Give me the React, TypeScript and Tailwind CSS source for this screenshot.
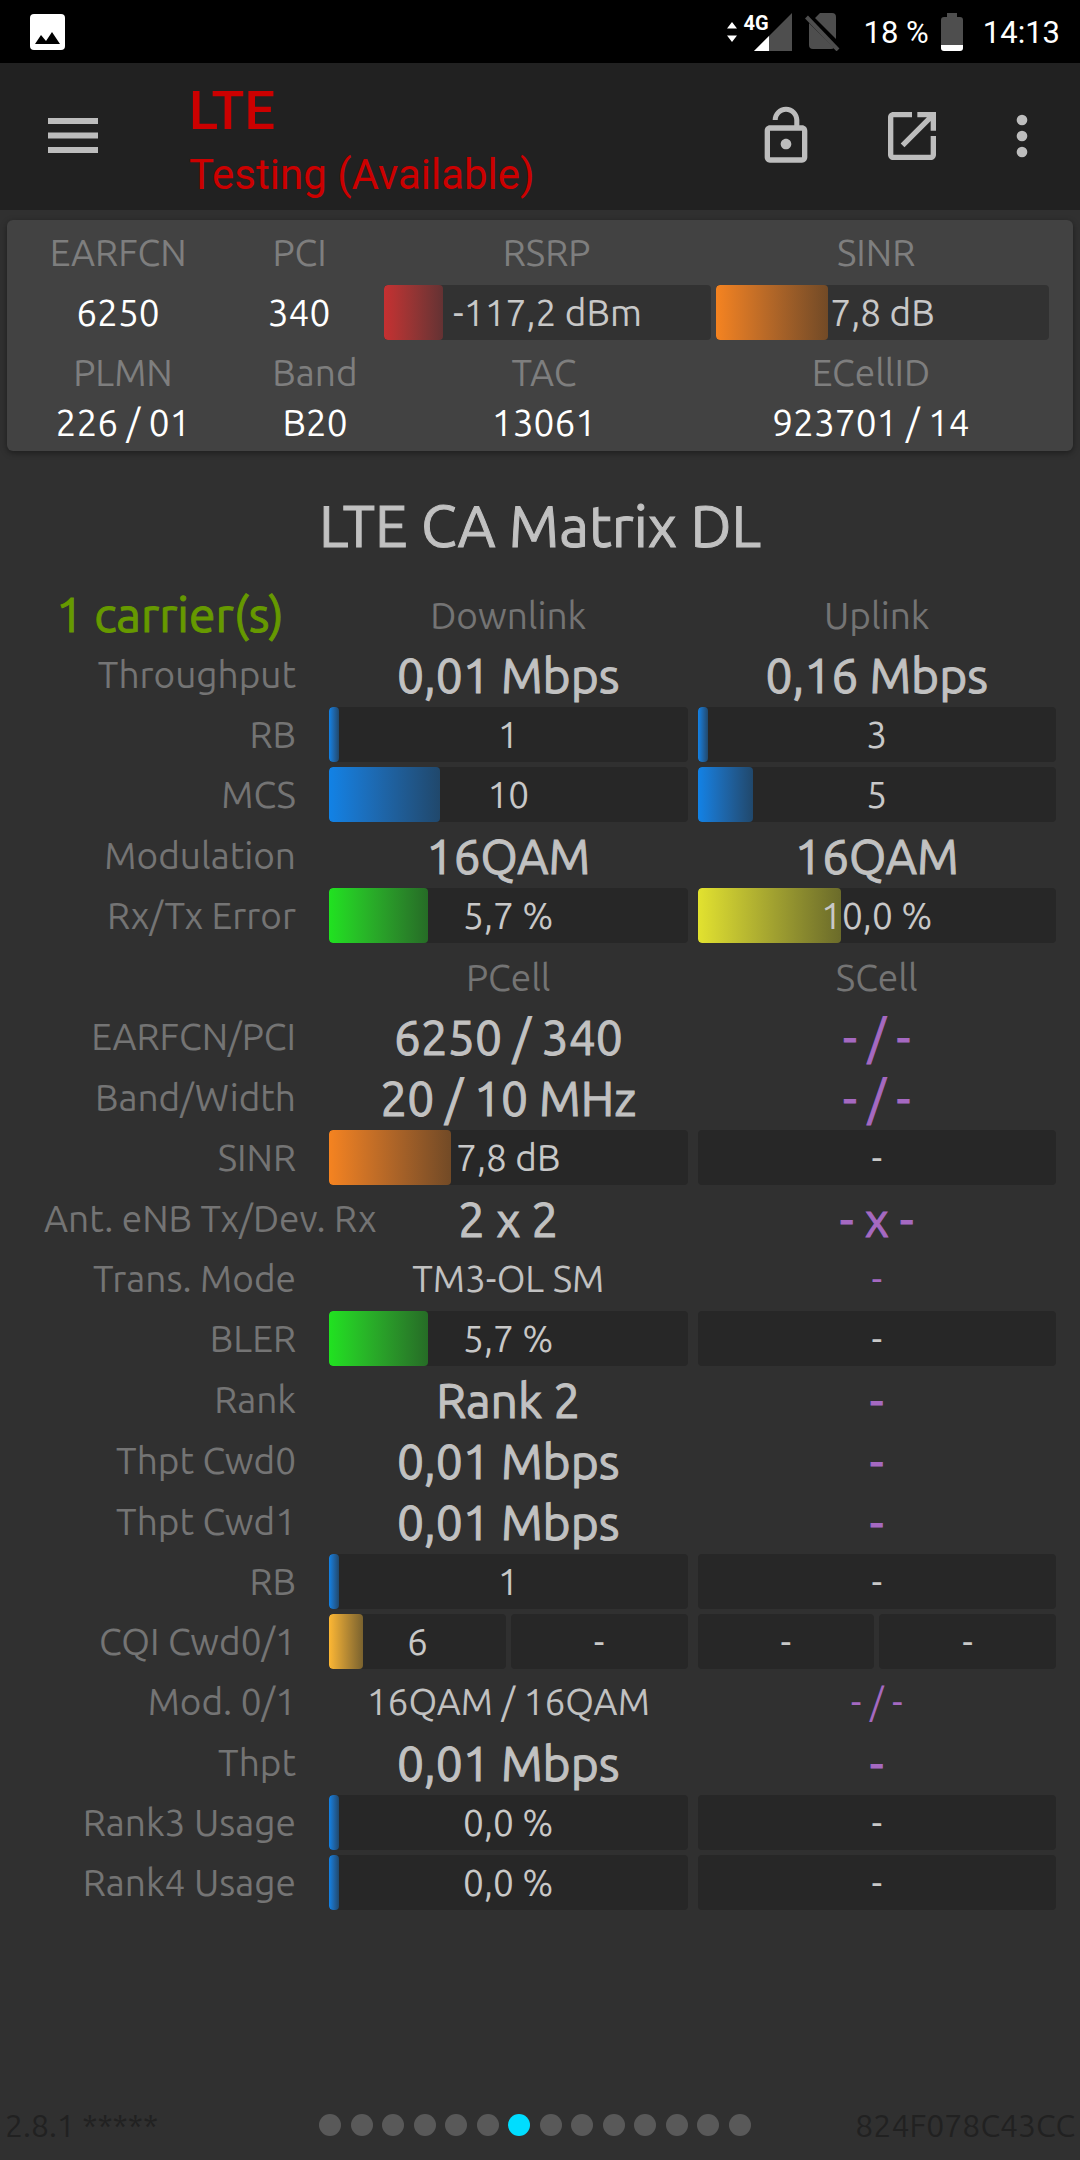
import type { ReactNode } from 'react';

type Tone = 'blue' | 'green' | 'yellow' | 'orange' | 'amber' | 'red';

interface Gauge {
  text: string;
  percent?: number;
  tone?: Tone;
}

interface MatrixRow {
  label: string;
  kind: 'head' | 'large' | 'small' | 'gauge';
  first: string | Gauge[];
  second: string | Gauge[];
}

const TONES: Record<Tone, string> = {
  blue: 'from-[#1182e6] to-[#20486c]',
  green: 'from-[#20e220] to-[#266c26]',
  yellow: 'from-[#e2e22f] to-[#6b6b2a]',
  orange: 'from-[#f58320] to-[#724a26]',
  amber: 'from-[#fdb733] to-[#7a622e]',
  red: 'from-[#c63031] to-[#643233]'
};

const NONE: Gauge[] = [{ text: '-' }];

const ROWS: MatrixRow[] = [
  { label: 'Throughput', kind: 'large', first: '0,01 Mbps', second: '0,16 Mbps' },
  {
    label: 'RB',
    kind: 'gauge',
    first: [{ text: '1', percent: 1, tone: 'blue' }],
    second: [{ text: '3', percent: 2, tone: 'blue' }]
  },
  {
    label: 'MCS',
    kind: 'gauge',
    first: [{ text: '10', percent: 31, tone: 'blue' }],
    second: [{ text: '5', percent: 15.5, tone: 'blue' }]
  },
  { label: 'Modulation', kind: 'large', first: '16QAM', second: '16QAM' },
  {
    label: 'Rx/Tx Error',
    kind: 'gauge',
    first: [{ text: '5,7 %', percent: 27.5, tone: 'green' }],
    second: [{ text: '10,0 %', percent: 40, tone: 'yellow' }]
  },
  { label: '', kind: 'head', first: 'PCell', second: 'SCell' },
  { label: 'EARFCN/PCI', kind: 'large', first: '6250 / 340', second: '- / -' },
  { label: 'Band/Width', kind: 'large', first: '20 / 10 MHz', second: '- / -' },
  { label: 'SINR', kind: 'gauge', first: [{ text: '7,8 dB', percent: 34, tone: 'orange' }], second: NONE },
  { label: 'Ant. eNB Tx/Dev. Rx', kind: 'large', first: '2 x 2', second: '- x -' },
  { label: 'Trans. Mode', kind: 'small', first: 'TM3-OL SM', second: '-' },
  { label: 'BLER', kind: 'gauge', first: [{ text: '5,7 %', percent: 27.5, tone: 'green' }], second: NONE },
  { label: 'Rank', kind: 'large', first: 'Rank 2', second: '-' },
  { label: 'Thpt Cwd0', kind: 'large', first: '0,01 Mbps', second: '-' },
  { label: 'Thpt Cwd1', kind: 'large', first: '0,01 Mbps', second: '-' },
  { label: 'RB', kind: 'gauge', first: [{ text: '1', percent: 1, tone: 'blue' }], second: NONE },
  {
    label: 'CQI Cwd0/1',
    kind: 'gauge',
    first: [{ text: '6', percent: 19, tone: 'amber' }, { text: '-' }],
    second: [{ text: '-' }, { text: '-' }]
  },
  { label: 'Mod. 0/1', kind: 'small', first: '16QAM / 16QAM', second: '- / -' },
  { label: 'Thpt', kind: 'large', first: '0,01 Mbps', second: '-' },
  { label: 'Rank3 Usage', kind: 'gauge', first: [{ text: '0,0 %', percent: 0, tone: 'blue' }], second: NONE },
  { label: 'Rank4 Usage', kind: 'gauge', first: [{ text: '0,0 %', percent: 0, tone: 'blue' }], second: NONE }
];

function Bar({ text, percent, tone }: Gauge) {
  return (
    <div className="relative h-[55px] flex-1 overflow-hidden rounded bg-[#1b1b1b]/39">
      {tone && (
        <div
          className={`h-full min-w-[10px] rounded bg-linear-to-r ${TONES[tone]}`}
          style={{ width: `${percent}%` }}
        />
      )}
      <span className="absolute inset-0 flex items-center justify-center whitespace-nowrap text-[#c8c8c8]">{text}</span>
    </div>
  );
}

function Cell({ kind, value }: { kind: MatrixRow['kind']; value: string | Gauge[] }) {
  if (typeof value !== 'string') {
    return (
      <td className="px-[5px] pt-[2px] pb-[3px]">
        <div className="flex gap-[5px]">
          {value.map((gauge, i) => (
            <Bar key={i} {...gauge} />
          ))}
        </div>
      </td>
    );
  }
  if (kind === 'head') {
    return <th className="p-0 pt-1 font-normal text-[#747474]">{value}</th>;
  }
  const size = kind === 'large' ? 'text-[48px] [-webkit-text-stroke-width:1px]' : 'text-[37px]';
  const color = value.startsWith('-') ? 'text-[#a569c1]' : 'text-[#c1c1c1]';
  return <td className={`p-0 text-center leading-[60px] whitespace-nowrap ${size} ${color}`}>{value}</td>;
}

function StatusBar() {
  return (
    <div className="flex h-[63px] items-center bg-black pr-[20px] pl-[30px] font-['Roboto',sans-serif] text-[31px] leading-none text-white">
      <svg width="35" height="36" viewBox="0 0 35 36">
        <rect width="35" height="36" rx="4" fill="#fff" />
        <path d="M5 30l6-9 5 6 6-9 8 12z" fill="#000" />
      </svg>
      <div className="ml-auto flex items-center">
        <svg width="10" height="20" viewBox="0 0 10 20" fill="#fff">
          <path d="M0 6.500l5-6.500 5 6.500zM0 13.500h10l-5 6.500z" />
        </svg>
        <div className="relative ml-[17px]">
          <svg width="38" height="38" viewBox="0 0 38 38">
            <path d="M38 0v38H0z" fill="#4e4e4e" />
            <path d="M15 23v15H0z" fill="#fff" />
          </svg>
          <span className="absolute -top-[1px] -left-[10px] text-[20px] leading-[22px] font-bold">4G</span>
        </div>
        <svg className="ml-[13px]" width="35" height="38" viewBox="0 0 35 38">
          <path d="M10 5l5-5h12q4 0 4 4v22zM4 10l25 25q-1 1-3 1H8q-4 0-4-4z" fill="#4e4e4e" />
          <path d="M1.500 4L33 37" stroke="#4e4e4e" strokeWidth="4" />
        </svg>
        <span className="ml-[24px] pt-[2px]">18 %</span>
        <svg className="ml-[12px]" width="22" height="38" viewBox="0 0 22 38">
          <path d="M6 0h10v4h3q3 0 3 3v25H0V7q0-3 3-3h3z" fill="#4e4e4e" />
          <path d="M0 32h22v3q0 3-3 3H3q-3 0-3-3z" fill="#fff" />
        </svg>
        <span className="ml-[20px] pt-[2px]">14:13</span>
      </div>
    </div>
  );
}

function AppBar() {
  return (
    <header className="flex h-[147px] items-center bg-[#212121] pr-[42px] pb-[2px] pl-[48px] text-[#bdbdbd]">
      <button aria-label="Menu">
        <svg width="50" height="35" viewBox="0 0 50 35" fill="currentColor">
          <path d="M0 0h50v6H0zM0 14.500h50v6H0zM0 29h50v6H0z" />
        </svg>
      </button>
      <div className="ml-[91px] pt-[14px] font-['Roboto',sans-serif] whitespace-nowrap text-[#cc0000]">
        <h1 className="text-[54px] leading-[64px] font-medium">LTE</h1>
        <p className="text-[42px] leading-[64px]">Testing (Available)</p>
      </div>
      <div className="ml-auto flex gap-[62px]">
        <button aria-label="Unlock">
          <svg width="64" height="64" viewBox="0 0 24 24" fill="currentColor">
            <path d="M12 17c1.100 0 2-.9 2-2s-.9-2-2-2-2 .9-2 2 .9 2 2 2zm6-9h-1V6c0-2.760-2.240-5-5-5S7 3.240 7 6h1.900c0-1.710 1.390-3.100 3.100-3.100s3.100 1.390 3.100 3.100v2H6c-1.100 0-2 .9-2 2v10c0 1.100.9 2 2 2h12c1.100 0 2-.9 2-2V10c0-1.100-.9-2-2-2zm0 12H6V10h12v10z" />
          </svg>
        </button>
        <button aria-label="Open in window">
          <svg width="64" height="64" viewBox="0 0 24 24" fill="currentColor">
            <path d="M19 19H5V5h7V3H5c-1.110 0-2 .9-2 2v14c0 1.100.89 2 2 2h14c1.100 0 2-.9 2-2v-7h-2v7zM14 3v2h3.590l-9.830 9.830 1.410 1.410L19 6.410V10h2V3h-7z" />
          </svg>
        </button>
        <button aria-label="More options">
          <svg width="32" height="64" viewBox="6 0 12 24" fill="currentColor">
            <circle cx="12" cy="6" r="2" />
            <circle cx="12" cy="12" r="2" />
            <circle cx="12" cy="18" r="2" />
          </svg>
        </button>
      </div>
    </header>
  );
}

function CellLine({ className, children }: { className: string; children: ReactNode }) {
  return <div className={`grid items-center text-center whitespace-nowrap pl-[15px] ${className}`}>{children}</div>;
}

function CellCard() {
  return (
    <section className="mx-[7px] mt-[10px] rounded-md bg-[#424242] pt-2 pb-[3px] text-white shadow-[0_2px_6px_rgba(0,0,0,0.4)]">
      <CellLine className="h-[50px] grid-cols-[192fr_160fr_323fr_325fr] gap-x-[5px] pr-[34px] text-[#7e7e7e]">
        <span>EARFCN</span>
        <span>PCI</span>
        <span>RSRP</span>
        <span>SINR</span>
      </CellLine>
      <CellLine className="mt-[7px] grid-cols-[192fr_160fr_327fr_333fr] gap-x-[5px] pr-[24px]">
        <span>6250</span>
        <span>340</span>
        <Bar text="-117,2 dBm" percent={18} tone="red" />
        <Bar text="7,8 dB" percent={33.6} tone="orange" />
      </CellLine>
      <CellLine className="mt-2 h-[50px] grid-cols-[202fr_182fr_276fr_378fr] pr-[13px] text-[#7e7e7e]">
        <span>PLMN</span>
        <span>Band</span>
        <span>TAC</span>
        <span>ECellID</span>
      </CellLine>
      <CellLine className="h-[50px] grid-cols-[202fr_182fr_276fr_378fr] pr-[13px]">
        <span>226 / 01</span>
        <span>B20</span>
        <span>13061</span>
        <span>923701 / 14</span>
      </CellLine>
    </section>
  );
}

export default function App() {
  return (
    <div className="flex min-h-screen flex-col bg-[#303030] font-['Ubuntu','Noto_Sans',sans-serif] text-[37px] leading-[50px]">
      <StatusBar />
      <AppBar />
      <CellCard />

      <main className="pr-[19px] pl-[44px]">
        <h2 className="mt-[40px] mb-[23px] pr-[25px] text-center text-[58px] leading-[70px] text-[#c1c1c1] [-webkit-text-stroke-width:1px]">
          LTE CA Matrix DL
        </h2>
        <table className="w-full table-fixed border-collapse">
          <colgroup>
            <col className="w-[280px]" />
            <col />
            <col />
          </colgroup>
          <thead>
            <tr className="h-[60px]">
              <th className="p-0 pr-[28px] text-[48px] leading-[60px] font-normal whitespace-nowrap text-[#669900] [-webkit-text-stroke-width:1px]">
                1 carrier(s)
              </th>
              <th className="p-0 pt-1 font-normal text-[#747474]">Downlink</th>
              <th className="p-0 pt-1 font-normal text-[#747474]">Uplink</th>
            </tr>
          </thead>
          <tbody>
            {ROWS.map((row, i) => (
              <tr key={i} className={row.kind === 'large' ? 'h-[61px]' : 'h-[60px]'}>
                <th className="p-0 pr-[28px] text-right font-normal whitespace-nowrap text-[#747474]">{row.label}</th>
                <Cell kind={row.kind} value={row.first} />
                <Cell kind={row.kind} value={row.second} />
              </tr>
            ))}
          </tbody>
        </table>
      </main>

      <footer className="mt-auto grid grid-cols-[314fr_432px_324fr] items-center px-[5px] pb-[10px] text-[32px] whitespace-nowrap text-[#212121]">
        <span>2.8.1 *****</span>
        <nav className="flex justify-between">
          {Array.from({ length: 14 }, (_, i) => (
            <button
              key={i}
              aria-label={`Page ${i + 1}`}
              className={`size-[22px] rounded-full ${i === 6 ? 'bg-[#00ddff]' : 'bg-[#595959]'}`}
            />
          ))}
        </nav>
        <span className="text-right">824F078C43CC</span>
      </footer>
    </div>
  );
}
